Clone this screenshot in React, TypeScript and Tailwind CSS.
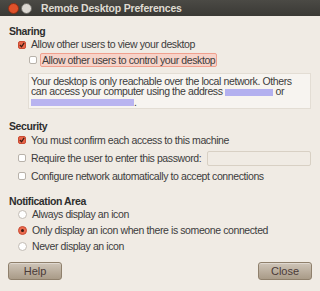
import React from "react";

function Check({ checked }: { checked?: boolean }) {
  return (
    <span
      className={`flex h-[8px] w-[8px] shrink-0 items-center justify-center rounded-[2px] border ${
        checked ? "border-[#c94b33] bg-[#e8664a]" : "border-[#b8b2aa] bg-white"
      }`}
    >
      {checked && (
        <svg width="6" height="6" viewBox="0 0 7 7">
          <path d="M1 3.5 L3 5.5 L6 1" stroke="#3a1a12" strokeWidth="1.4" fill="none" />
        </svg>
      )}
    </span>
  );
}

function Radio({ checked }: { checked?: boolean }) {
  return (
    <span
      className={`flex h-[9px] w-[9px] shrink-0 items-center justify-center rounded-full border ${
        checked ? "border-[#c94b33] bg-[#ea6b4f]" : "border-[#c2bcb4] bg-white"
      }`}
    >
      {checked && <span className="h-[3px] w-[3px] rounded-full bg-[#3a1a12]" />}
    </span>
  );
}

function Row({ children, control }: { children: React.ReactNode; control: React.ReactNode }) {
  return (
    <div className="flex h-[16px] items-center gap-[5px] pl-[9px]">
      {control}
      <span>{children}</span>
    </div>
  );
}

function DialogButton({ label }: { label: string }) {
  return (
    <button className="h-[18px] w-[54px] rounded-[3px] border border-[#8f806c] bg-gradient-to-b from-[#cfc5b8] to-[#a99b88] text-[11px] text-[#4a3a38] shadow-[inset_0_1px_0_rgba(255,255,255,0.35)]">
      {label}
    </button>
  );
}

export default function App() {
  return (
    <div
      className="flex h-[291px] w-[320px] flex-col overflow-hidden whitespace-nowrap bg-[#f0ebe4] text-[10.5px] leading-none tracking-[-0.4px] text-[#3c3c3c]"
      style={{ fontFamily: '"Liberation Sans", Arial, sans-serif' }}
    >
      {/* Title bar */}
      <div className="flex h-[16px] shrink-0 items-center bg-gradient-to-b from-[#4b4a45] to-[#3a3935] pl-[8px]">
        <span className="h-[11px] w-[11px] rounded-full border border-[#8a2e16] bg-[#e0512a]" />
        <span className="ml-[2px] h-[11px] w-[11px] rounded-full border border-[#6a6862] bg-[#dcd8d2]" />
        <span className="ml-[9px] text-[10.5px] font-bold tracking-[-0.2px] text-[#dfdbd2]">
          Remote Desktop Preferences
        </span>
      </div>

      <div className="flex-1 px-[9px] pt-[10px]">
        <div className="font-bold text-[#2e2e2e]">Sharing</div>
        <div className="flex h-[16px] items-center gap-[5px] pl-[9px]">
          <Check checked />
          <span>Allow other users to view your desktop</span>
        </div>
        <div className="flex h-[15px] items-center gap-[3px] pl-[20px]">
          <Check />
          <span className="rounded-[2px] border border-[#f0a08e] bg-[#f7d3c9] px-[1px] py-[1px]">
            Allow other users to control your desktop
          </span>
        </div>
        <div className="ml-[19px] mt-[5px] h-[36px] border border-[#e3ddd4] bg-[#f7f4f0] px-[2px] pt-[2px] leading-[10.5px]">
          <div>Your desktop is only reachable over the local network. Others</div>
          <div>
            can access your computer using the address{" "}
            <span className="inline-block h-[7px] w-[48px] bg-[#b3b0ef] align-middle" /> or
          </div>
          <div>
            <span className="inline-block h-[7px] w-[103px] bg-[#b9b4f0] align-middle" />.
          </div>
        </div>

        <div className="mt-[12px] font-bold text-[#2e2e2e]">Security</div>
        <div>
          <div className="flex h-[18px] items-center gap-[5px] pl-[9px]">
            <Check checked />
            <span>You must confirm each access to this machine</span>
          </div>
          <div className="flex h-[18px] items-center gap-[5px] pl-[9px]">
            <Check />
            <span>Require the user to enter this password:</span>
            <span className="ml-auto h-[15px] w-[104px] rounded-[2px] border border-[#d8d0c4] bg-[#f0ebe4]" />
          </div>
          <div className="flex h-[18px] items-center gap-[5px] pl-[9px]">
            <Check />
            <span>Configure network automatically to accept connections</span>
          </div>
        </div>

        <div className="mt-[11px] font-bold text-[#2e2e2e]">Notification Area</div>
        <div>
          <Row control={<Radio />}>Always display an icon</Row>
          <Row control={<Radio checked />}>Only display an icon when there is someone connected</Row>
          <Row control={<Radio />}>Never display an icon</Row>
        </div>
      </div>

      <div className="flex shrink-0 justify-between px-[8px] pb-[11px] tracking-[0px]">
        <DialogButton label="Help" />
        <DialogButton label="Close" />
      </div>
    </div>
  );
}
